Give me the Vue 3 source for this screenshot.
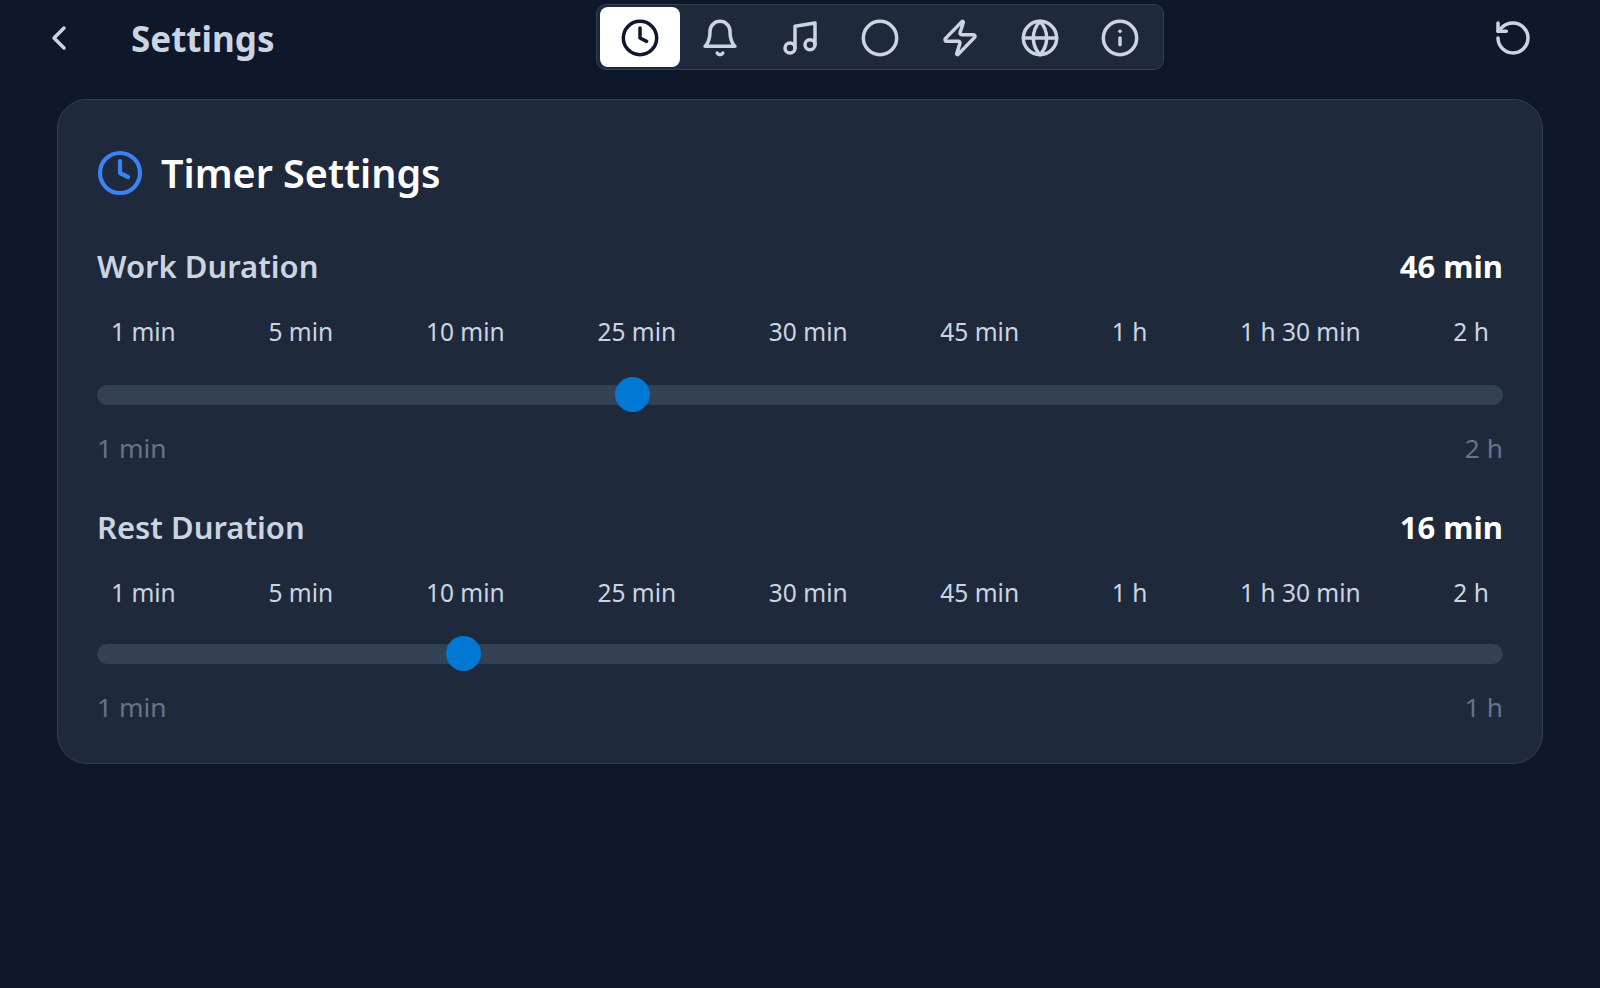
<template>
  <div class="page">
    <header class="topbar">
      <div class="title-area">
        <button class="icon-btn back-btn">
          <svg class="icon" viewBox="0 0 24 24"><path d="m15 18-6-6 6-6" /></svg>
        </button>
        <h1 class="page-title">Settings</h1>
      </div>

      <nav class="tabs">
        <button
          v-for="tab in tabs"
          :key="tab.name"
          class="tab"
          :class="{ active: activeTab === tab.name }"
          @click="activeTab = tab.name"
        >
          <svg class="icon" viewBox="0 0 24 24">
            <path v-for="d in tab.paths" :key="d" :d="d" />
          </svg>
        </button>
      </nav>

      <button class="icon-btn reset-btn" @click="resetAll">
        <svg class="icon" viewBox="0 0 24 24">
          <path d="M3 12a9 9 0 1 0 9-9 9.75 9.75 0 0 0-6.74 2.74L3 8" />
          <path d="M3 3v5h5" />
        </svg>
      </button>
    </header>

    <section class="card">
      <div class="card-head">
        <svg class="icon head-icon" viewBox="0 0 24 24">
          <path :d="circle" />
          <path d="M12 6v6l4 2" />
        </svg>
        <h2 class="card-title">Timer Settings</h2>
      </div>

      <div v-for="item in durations" :key="item.label" class="duration">
        <div class="duration-head">
          <span class="duration-label">{{ item.label }}</span>
          <span class="duration-value">{{ item.value }} min</span>
        </div>
        <div class="presets">
          <span v-for="p in presets" :key="p" class="preset">{{ p }}</span>
        </div>
        <input v-model.number="item.value" class="slider" type="range" min="1" :max="item.max" />
        <div class="range-labels">
          <span>1 min</span>
          <span>{{ item.maxLabel }}</span>
        </div>
      </div>
    </section>
  </div>
</template>

<script setup>
import { ref, reactive } from 'vue';

const circle = 'M12 2a10 10 0 1 0 0 20 10 10 0 0 0 0-20';

const tabs = [
  { name: 'timer', paths: [circle, 'M12 6v6l4 2'] },
  { name: 'alerts', paths: ['M6 8a6 6 0 0 1 12 0c0 7 3 9 3 9H3s3-2 3-9', 'M10.3 21a1.94 1.94 0 0 0 3.4 0'] },
  { name: 'sound', paths: ['M9 18V5l12-2v13', 'M9 18a3 3 0 1 1-6 0 3 3 0 0 1 6 0', 'M21 16a3 3 0 1 1-6 0 3 3 0 0 1 6 0'] },
  { name: 'theme', paths: [circle] },
  { name: 'power', paths: ['M4 14a1 1 0 0 1-.78-1.63l9.9-10.2a.5.5 0 0 1 .86.46l-1.92 6.02A1 1 0 0 0 13 10h7a1 1 0 0 1 .78 1.63l-9.9 10.2a.5.5 0 0 1-.86-.46l1.92-6.02A1 1 0 0 0 11 14z'] },
  { name: 'language', paths: [circle, 'M12 2a14.5 14.5 0 0 0 0 20 14.5 14.5 0 0 0 0-20', 'M2 12h20'] },
  { name: 'about', paths: [circle, 'M12 16v-4', 'M12 8h.01'] }
];

const activeTab = ref('timer');

const presets = ['1 min', '5 min', '10 min', '25 min', '30 min', '45 min', '1 h', '1 h 30 min', '2 h'];

const durations = reactive([
  { label: 'Work Duration', value: 46, max: 120, maxLabel: '2 h' },
  { label: 'Rest Duration', value: 16, max: 60, maxLabel: '1 h' }
]);

const resetAll = () => {
  durations[0].value = 25;
  durations[1].value = 5;
};
</script>

<style>
body {
  background: #0f172a;
}
</style>

<style scoped>
.page {
  min-height: 100vh;
  background: #0f172a;
  font-family: "Noto Sans", "Open Sans", sans-serif;
  color: #e2e8f0;
  box-sizing: border-box;
}

.topbar {
  display: flex;
  align-items: center;
  padding: 4px 67px 0 39px;
}

.title-area {
  display: flex;
  align-items: center;
  flex: 0 0 557px;
}

.icon-btn {
  width: 40px;
  height: 40px;
  margin-top: 2px;
  padding: 0;
  border: none;
  background: none;
  color: #cbd5e1;
  cursor: pointer;
}

.icon {
  display: block;
  width: 100%;
  height: 100%;
  fill: none;
  stroke: currentColor;
  stroke-width: 2.1;
  stroke-linecap: round;
  stroke-linejoin: round;
}

.page-title {
  margin: 4px 0 0 52px;
  font-size: 35px;
  line-height: 40px;
  font-weight: 700;
  color: #cbd5e1;
}

.tabs {
  display: flex;
  padding: 2px 3px;
  background: #1e293b;
  border: 1px solid #334155;
  border-radius: 10px;
}

.tab {
  width: 80px;
  height: 60px;
  padding: 11px 20px 9px;
  box-sizing: border-box;
  border: none;
  border-radius: 8px;
  background: none;
  color: #cbd5e1;
  cursor: pointer;
}

.tab.active {
  background: #fff;
  color: #0f172a;
}

.reset-btn {
  margin-left: auto;
}

.card {
  margin: 29px 57px 0;
  padding: 49px 39px 44px;
  background: #1e293b;
  border: 1px solid #334155;
  border-radius: 30px;
}

.card-head {
  display: flex;
  align-items: center;
  gap: 17px;
}

.head-icon {
  width: 48px;
  height: 48px;
  margin-left: -1px;
  color: #3b82f6;
}

.card-title {
  margin: 0;
  font-size: 39.5px;
  line-height: 44px;
  font-weight: 600;
  color: #fff;
}

.duration {
  margin-top: 49px;
}

.card-head + .duration {
  margin-top: 51px;
}

.duration-head {
  display: flex;
  justify-content: space-between;
  font-size: 31px;
  line-height: 36px;
  font-weight: 600;
}

.duration-label {
  color: #cbd5e1;
}

.duration-value {
  font-weight: 700;
  color: #fff;
}

.presets {
  display: flex;
  justify-content: space-between;
  margin-top: 36px;
  padding: 0 14px;
  font-size: 24.5px;
  line-height: 24px;
  color: #cbd5e1;
}

.slider {
  display: block;
  width: 100%;
  height: 35px;
  margin: 33px 0 0;
  background: none;
  -webkit-appearance: none;
  appearance: none;
  cursor: pointer;
}

.duration + .duration .slider {
  margin-top: 31px;
}

.slider::-webkit-slider-runnable-track {
  height: 20px;
  background: #334155;
  border-radius: 10px;
}

.slider::-webkit-slider-thumb {
  -webkit-appearance: none;
  width: 35px;
  height: 35px;
  margin-top: -7.5px;
  background: #0078d4;
  border-radius: 50%;
}

.range-labels {
  display: flex;
  justify-content: space-between;
  margin-top: 24px;
  font-size: 26.3px;
  line-height: 24px;
  color: #64748b;
}
</style>
